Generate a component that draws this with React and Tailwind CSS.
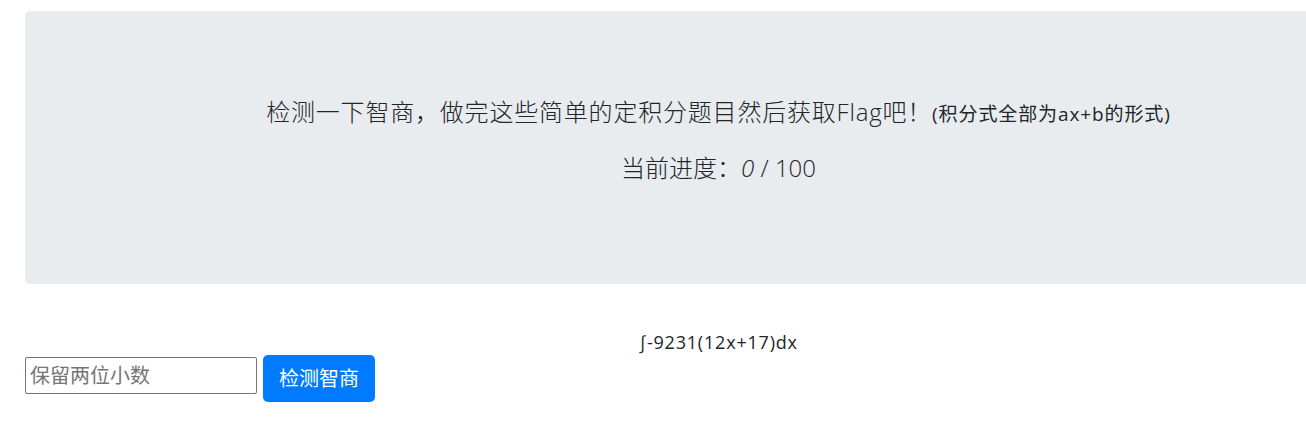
export default function App() {
  const font = { fontFamily: '"Open Sans", "Noto Sans CJK SC", sans-serif' };

  return (
    <div className="w-full min-h-[433px] overflow-hidden bg-white text-[#212529]" style={font}>
      <div className="w-[1387px] ml-[25px] pt-[11px]">
        {/* jumbotron */}
        <div className="bg-[#e9ecef] rounded-[5px] pt-[86px] pb-[101px] text-center">
          <p className="h-[30px] leading-[30px] text-[24px] font-light tracking-[0.8px]">
            检测一下智商，做完这些简单的定积分题目然后获取Flag吧！
            <small className="text-[19px] font-normal tracking-[0.9px]">(积分式全部为ax+b的形式)</small>
          </p>
          <p className="mt-[26px] h-[30px] leading-[30px] text-[24px] font-light">
            当前进度：<i>0</i> / 100
          </p>
        </div>

        <div className="mt-[46px] text-center text-[18px] leading-[24px] tracking-[0.8px]">∫-9231(12x+17)dx</div>
      </div>

      <div className="flex items-start gap-[6px] ml-[25px] mt-[1px]">
        <input
          type="text"
          placeholder="保留两位小数"
          className="mt-[2px] w-[232px] h-[37px] px-[4px] text-[20px] border border-[#767676] rounded-[2px] placeholder:text-[#757575] outline-none"
          style={font}
        />
        <button className="h-[47px] w-[112px] bg-[#007bff] text-white text-[20px] rounded-[5px]">
          检测智商
        </button>
      </div>
    </div>
  );
}
